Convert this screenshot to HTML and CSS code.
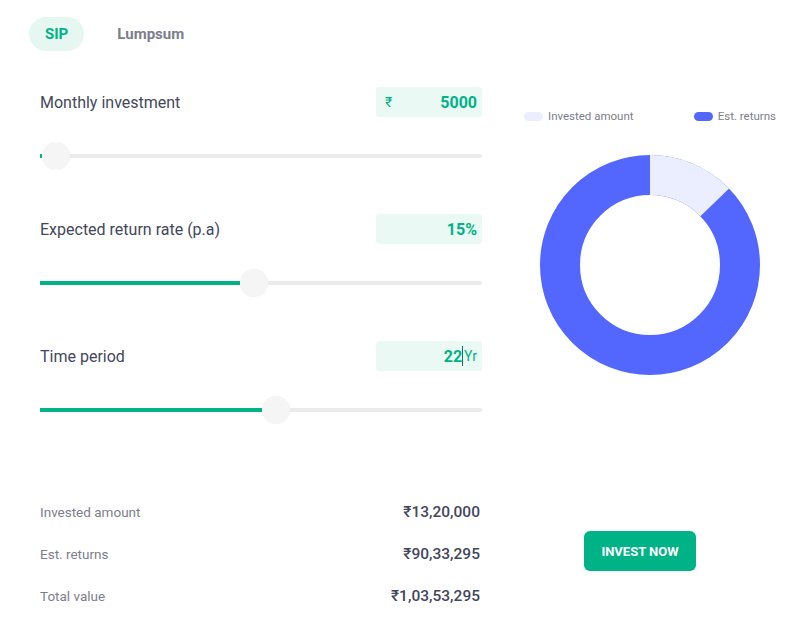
FILE: index.html
```html
<!DOCTYPE html>
<html lang="en">
<head>
    <meta charset="UTF-8">
    <meta name="viewport" content="width=device-width, initial-scale=1.0">
    <title>SIP Calculator</title>
    <link rel="stylesheet" href="styles.css">
</head>
<body>
    <div class="page">
        <nav class="tabs">
            <button class="tab active">SIP</button>
            <button class="tab">Lumpsum</button>
        </nav>
        <div class="main">
            <div class="left">
                <div class="field">
                    <div class="field-head">
                        <span class="label">Monthly investment</span>
                        <div class="box"><span class="rupee">₹</span><span class="val">5000</span></div>
                    </div>
                    <div class="slider">
                        <div class="fill" style="width: 2px"></div>
                        <div class="thumb" style="left: 2px"></div>
                    </div>
                </div>
                <div class="field">
                    <div class="field-head">
                        <span class="label">Expected return rate (p.a)</span>
                        <div class="box"><span class="val">15%</span></div>
                    </div>
                    <div class="slider">
                        <div class="fill" style="width: 200px"></div>
                        <div class="thumb" style="left: 200px"></div>
                    </div>
                </div>
                <div class="field">
                    <div class="field-head">
                        <span class="label">Time period</span>
                        <div class="box"><span class="val">22</span><span class="caret"></span><span class="unit">Yr</span></div>
                    </div>
                    <div class="slider">
                        <div class="fill" style="width: 222px"></div>
                        <div class="thumb" style="left: 222px"></div>
                    </div>
                </div>
                <div class="results">
                    <div class="result-row"><span>Invested amount</span><strong>₹13,20,000</strong></div>
                    <div class="result-row"><span>Est. returns</span><strong>₹90,33,295</strong></div>
                    <div class="result-row"><span>Total value</span><strong>₹1,03,53,295</strong></div>
                </div>
            </div>
            <div class="right">
                <div class="legend">
                    <span class="legend-item"><i class="swatch light"></i>Invested amount</span>
                    <span class="legend-item"><i class="swatch blue"></i>Est. returns</span>
                </div>
                <svg class="donut" width="220" height="220" viewBox="0 0 220 220">
                    <circle cx="110" cy="110" r="90" fill="none" stroke="#5367ff" stroke-width="40"/>
                    <circle cx="110" cy="110" r="90" fill="none" stroke="#ebeeff" stroke-width="40"
                            stroke-dasharray="72.1 600" transform="rotate(-90 110 110)"/>
                </svg>
                <button class="invest">INVEST NOW</button>
            </div>
        </div>
    </div>
</body>
</html>
```

FILE: styles.css
```css
body {
    margin: 0;
    font-family: Roboto, "Noto Sans", sans-serif;
    background-color: #ffffff;
    color: #44475b;
}
.page {
    padding-top: 17px;
}
.tabs {
    display: flex;
    gap: 17px;
    margin-left: 29px;
}
.tab {
    height: 34px;
    padding: 0 16px;
    border: none;
    border-radius: 17px;
    background: none;
    font-family: inherit;
    font-size: 15px;
    font-weight: 700;
    color: #7c7e8c;
}
.tab.active {
    background-color: #e6f7f1;
    color: #00b386;
}
.main {
    display: flex;
    margin-top: 36px;
}
.left {
    width: 442px;
    margin-left: 40px;
}
.field {
    padding-bottom: 56px;
}
.field-head {
    display: flex;
    justify-content: space-between;
    align-items: center;
    height: 30px;
}
.label {
    font-size: 16px;
}
.box {
    display: flex;
    align-items: center;
    justify-content: flex-end;
    width: 106px;
    height: 30px;
    padding: 0 5px 0 9px;
    box-sizing: border-box;
    border-radius: 3px;
    background-color: #eaf9f4;
    color: #00b386;
    font-size: 16px;
    font-weight: 700;
}
.rupee {
    margin-right: auto;
    font-size: 14px;
    font-weight: 400;
}
.caret {
    width: 1px;
    height: 20px;
    background-color: #067a5a;
}
.unit {
    font-size: 14px;
    font-weight: 400;
    margin-left: 1px;
}
.slider {
    position: relative;
    height: 4px;
    margin-top: 37px;
    border-radius: 2px;
    background-color: #ebebeb;
}
.fill {
    height: 4px;
    background-color: #00b386;
}
.thumb {
    position: absolute;
    top: -12px;
    width: 28px;
    height: 28px;
    border-radius: 50%;
    background-color: #f5f5f5;
    box-shadow: 0 0 1px rgba(0, 0, 0, 0.05);
}
.results {
    margin-top: 23px;
}
.result-row {
    display: flex;
    justify-content: space-between;
    align-items: center;
    height: 42px;
    padding-right: 2px;
}
.result-row span {
    font-size: 13.5px;
    color: #7c7e8c;
}
.result-row strong {
    font-size: 15.5px;
    font-weight: 500;
    color: #44475b;
}
.right {
    display: flex;
    flex-direction: column;
    width: 260px;
    margin-left: 38px;
}
.legend {
    display: flex;
    justify-content: space-between;
    height: 13px;
    padding: 0 4px;
    margin-top: 23px;
    font-size: 11.5px;
    line-height: 13px;
    color: #7c7e8c;
}
.legend-item {
    display: flex;
    align-items: center;
    gap: 5px;
}
.swatch {
    width: 19px;
    height: 9px;
    border-radius: 5px;
}
.swatch.light {
    background-color: #ebeeff;
}
.swatch.blue {
    background-color: #5367ff;
}
.donut {
    margin: 32px 0 0 20px;
}
.invest {
    width: 112px;
    height: 40px;
    margin: 156px 0 0 64px;
    border: none;
    border-radius: 6px;
    background-color: #00b386;
    color: #ffffff;
    font-family: inherit;
    font-size: 13px;
    font-weight: 700;
}
```
